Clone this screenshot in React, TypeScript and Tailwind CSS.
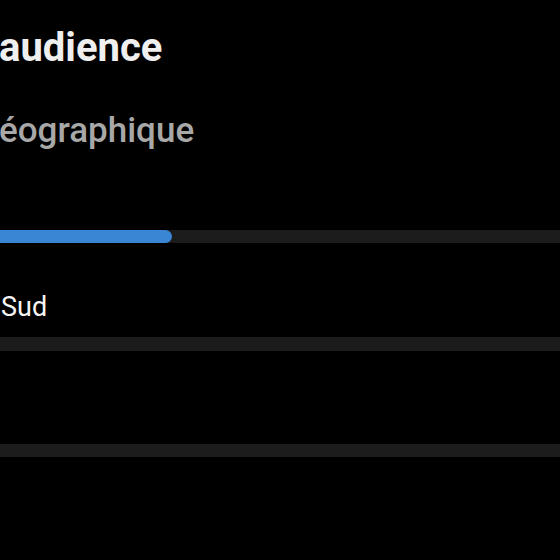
export default function App() {
  return (
    <div className="w-[560px] h-[560px] bg-black overflow-hidden font-['Roboto',sans-serif]">
      <div className="flex flex-col pt-[28px]">
        <h1 className="text-[40px] leading-[40px] font-bold text-[#efefef] -ml-[1px]">audience</h1>
        <h2 className="mt-[45px] text-[35px] leading-[35px] font-medium text-[#a8a8a8] -ml-[1px]">éographique</h2>

        {/* progress */}
        <div className="mt-[82px] h-[13px] w-full bg-[#1c1c1c]">
          <div className="h-full w-[172px] rounded-r-full bg-[#3b86d4]" />
        </div>

        <span className="mt-[51px] ml-[1px] text-[27px] leading-[27px] text-[#f5f5f5]">Sud</span>
        <div className="mt-[16px] h-[14px] w-full bg-[#1c1c1c]" />
        <div className="mt-[93px] h-[13px] w-full bg-[#1c1c1c]" />
      </div>
    </div>
  )
}
